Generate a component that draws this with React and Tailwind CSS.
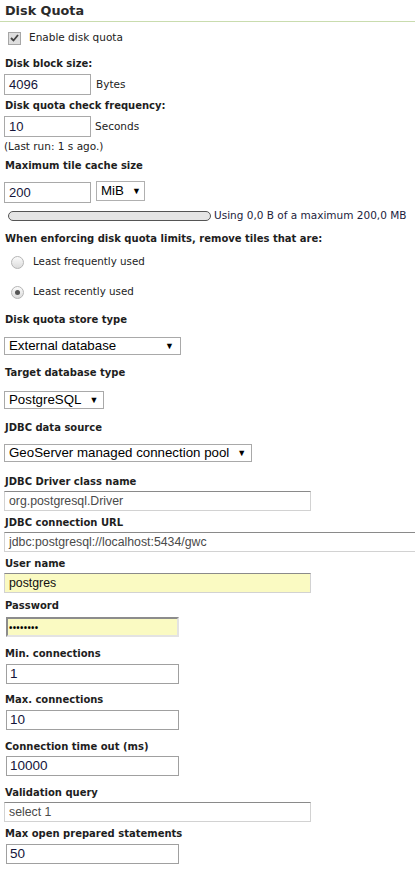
import React from "react";

const labelFont = { fontFamily: '"DejaVu Sans", Verdana, sans-serif' };
const inputFont = { fontFamily: '"Liberation Sans", Arial, sans-serif' };

function Label({ children, className = "" }) {
  return (
    <div
      style={labelFont}
      className={`h-[16px] leading-[16px] text-[10px] font-bold text-[#1e1e1e] whitespace-nowrap ${className}`}
    >
      {children}
    </div>
  );
}

function Select({ value, width, className = "" }) {
  return (
    <div
      style={inputFont}
      className={`h-[18px] border border-[#a9a9a9] bg-white flex items-center justify-between pl-[4px] pr-[6px] text-[13.3px] text-black ${width} ${className}`}
    >
      <span className="leading-[16px] whitespace-nowrap">{value}</span>
      <span className="text-[9px] leading-none ml-2">▼</span>
    </div>
  );
}

function PlainInput({ value, className = "" }) {
  return (
    <div
      style={inputFont}
      className={`h-[21px] w-[87px] border border-[#a9a9a9] bg-white flex items-center px-[4px] text-[13px] text-[#14143a] ${className}`}
    >
      {value}
    </div>
  );
}

function WideInput({ value, yellow, dark, className = "" }) {
  return (
    <div
      style={inputFont}
      className={`h-[20px] ml-[4px] border border-[#d2d2d2] border-t-[#8a8a8a] flex items-center px-[4px] text-[12.3px] whitespace-nowrap overflow-hidden ${
        yellow ? "bg-[#fafac2]" : "bg-white"
      } ${dark ? "text-[#111]" : "text-[#4a4a4a]"} ${className}`}
    >
      {value}
    </div>
  );
}

function SmallInput({ value, className = "" }) {
  return (
    <div
      style={inputFont}
      className={`h-[20px] w-[173px] ml-[6px] border border-[#a0a0a0] bg-white flex items-center px-[3px] text-[13.5px] text-[#14143a] ${className}`}
    >
      {value}
    </div>
  );
}

function Radio({ checked, label, className = "" }) {
  return (
    <div className={`h-[16px] flex items-center ${className}`}>
      <div className="w-[13px] h-[13px] ml-[7px] rounded-full border border-[#b5b5b5] bg-gradient-to-b from-[#fbfbfb] to-[#dcdcdc] flex items-center justify-center">
        {checked && <div className="w-[5px] h-[5px] rounded-full bg-[#555]" />}
      </div>
      <span style={labelFont} className="ml-[9px] text-[10.3px] text-[#222]">
        {label}
      </span>
    </div>
  );
}

export default function App() {
  return (
    <div className="w-[415px] h-[870px] bg-white overflow-hidden">
      <div
        style={labelFont}
        className="h-[22px] pl-[5px] border-b border-[#c9dcae] text-[12.8px] font-bold leading-[22px] text-[#2b2b2b]"
      >
        Disk Quota
      </div>

      <div className="pl-[4px]">
        <div className="h-[16px] mt-[8px] flex items-center">
          <div className="w-[13px] h-[13px] ml-[4px] border border-[#a6a6a6] bg-[#dedede] flex items-center justify-center">
            <svg width="9" height="8" viewBox="0 0 9 8">
              <path d="M1 4 L3.5 6.5 L8 1" stroke="#444" strokeWidth="1.8" fill="none" />
            </svg>
          </div>
          <span style={labelFont} className="ml-[8px] text-[10.5px] text-[#222]">
            Enable disk quota
          </span>
        </div>

        <Label className="mt-[10px] pl-[1px]">Disk block size:</Label>
        <div className="mt-[2px] flex items-center">
          <PlainInput value="4096" />
          <span style={labelFont} className="ml-[5px] text-[10.5px] text-[#222]">
            Bytes
          </span>
        </div>

        <Label className="mt-[3px] pl-[1px]">Disk quota check frequency:</Label>
        <div className="mt-[2px] flex items-center">
          <PlainInput value="10" />
          <span style={labelFont} className="ml-[4px] text-[10.5px] text-[#222]">
            Seconds
          </span>
        </div>
        <div
          style={labelFont}
          className="h-[16px] mt-[1px] leading-[16px] text-[10.5px] text-[#222]"
        >
          (Last run: 1 s ago.)
        </div>

        <Label className="mt-[4px] pl-[1px]">Maximum tile cache size</Label>
        <div className="mt-[7px] h-[21px] flex items-start">
          <PlainInput value="200" className="mt-[1px] h-[20px]" />
          <Select value="MiB" width="w-[49px]" className="ml-[5px] h-[20px] border-[#b0b0b0]" />
        </div>

        <div className="mt-[6px] h-[16px] flex items-center">
          <div className="ml-[4px] w-[203px] h-[10px] rounded-full border border-[#555] bg-[#e5e5e5]" />
          <span style={labelFont} className="ml-[3px] text-[10.5px] text-[#1c1c3c] whitespace-nowrap">
            Using 0,0 B of a maximum 200,0 MB
          </span>
        </div>

        <Label className="mt-[7px] pl-[1px]">
          When enforcing disk quota limits, remove tiles that are:
        </Label>

        <Radio className="mt-[7px]" label="Least frequently used" />
        <Radio className="mt-[14px]" checked label="Least recently used" />

        <Label className="mt-[12px] pl-[1px]">Disk quota store type</Label>
        <Select value="External database" width="w-[177px]" className="mt-[9px]" />

        <Label className="mt-[10px] pl-[1px]">Target database type</Label>
        <Select value="PostgreSQL" width="w-[100px]" className="mt-[10px]" />

        <Label className="mt-[11px] pl-[1px]">JDBC data source</Label>
        <Select value="GeoServer managed connection pool" width="w-[248px]" className="mt-[8px]" />
      </div>

      <div>
        <Label className="mt-[12px] pl-[5px]">JDBC Driver class name</Label>
        <WideInput value="org.postgresql.Driver" className="mt-[1px] w-[307px]" />

        <Label className="mt-[4px] pl-[5px]">JDBC connection URL</Label>
        <WideInput value="jdbc:postgresql://localhost:5434/gwc" className="mt-[1px] w-[420px] border-r-0" />

        <Label className="mt-[4px] pl-[5px]">User name</Label>
        <WideInput value="postgres" yellow dark className="mt-[1px] w-[307px]" />

        <Label className="mt-[5px] pl-[5px]">Password</Label>
        <div className="mt-[3px] ml-[6px] w-[173px] h-[20px] border-2 border-[#8c8c8c] border-r-[#e3e3e3] border-b-[#e3e3e3] bg-[#fafac2] flex items-center pl-[1px]">
          <span className="text-[9px] leading-none tracking-[0.3px] text-black font-bold">••••••••</span>
        </div>

        <Label className="mt-[9px] pl-[5px]">Min. connections</Label>
        <SmallInput value="1" className="mt-[2px]" />

        <Label className="mt-[8px] pl-[5px]">Max. connections</Label>
        <SmallInput value="10" className="mt-[2px]" />

        <Label className="mt-[9px] pl-[5px]">Connection time out (ms)</Label>
        <SmallInput value="10000" className="mt-[1px]" />

        <Label className="mt-[9px] pl-[5px]">Validation query</Label>
        <WideInput value="select 1" className="mt-[1px] w-[307px]" />

        <Label className="mt-[4px] pl-[5px]">Max open prepared statements</Label>
        <SmallInput value="50" className="mt-[2px]" />
      </div>
    </div>
  );
}
